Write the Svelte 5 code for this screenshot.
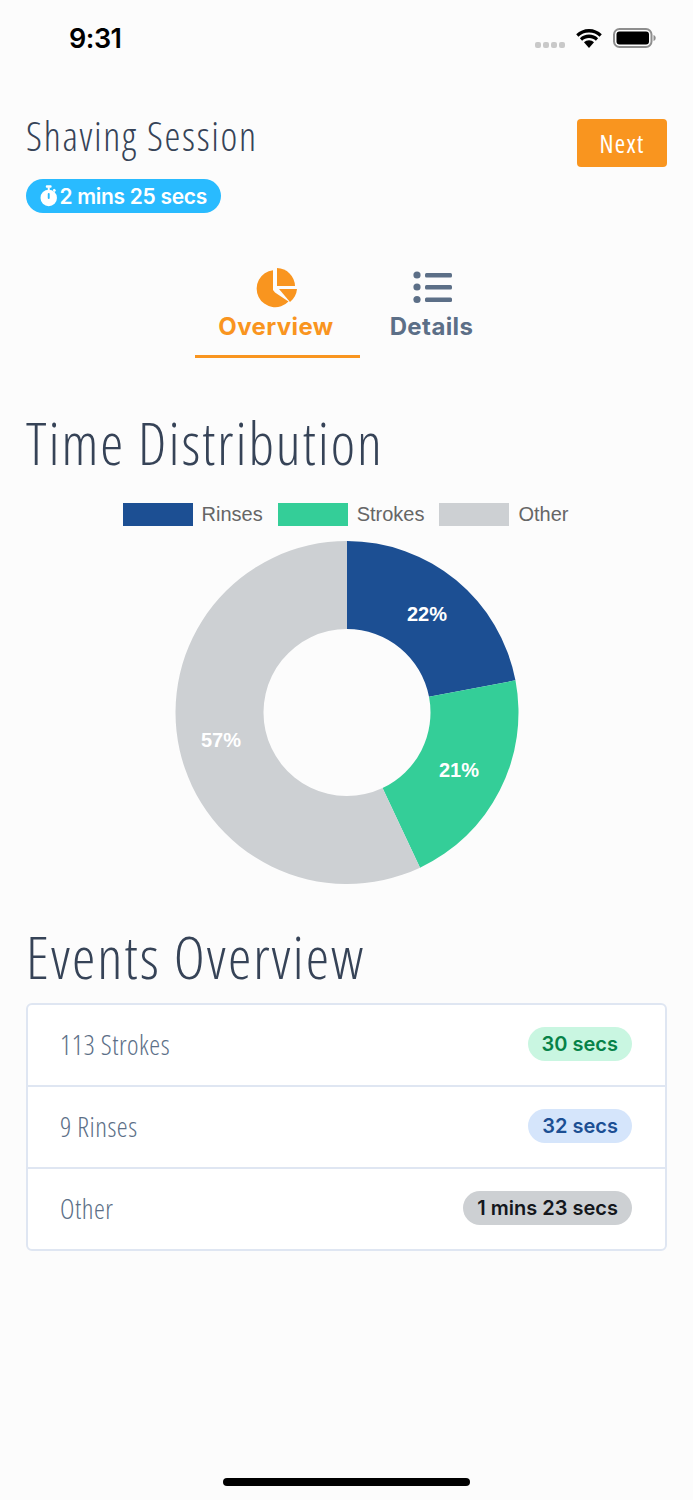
<script>
  const legend = [
    { label: 'Rinses', color: '#1c4f93' },
    { label: 'Strokes', color: '#34ce98' },
    { label: 'Other', color: '#cdd0d3' }
  ];

  const cx = 172;
  const cy = 171.5;
  const outer = 171.5;
  const inner = 83.5;

  const slices = [
    { share: 0.22, color: '#1c4f93', text: '22%', x: 252, y: 75 },
    { share: 0.21, color: '#34ce98', text: '21%', x: 284, y: 231 },
    { share: 0.57, color: '#cdd0d3', text: '57%', x: 46, y: 201 }
  ];

  function point(r, turn) {
    const a = turn * Math.PI * 2;
    return `${(cx + r * Math.sin(a)).toFixed(2)} ${(cy - r * Math.cos(a)).toFixed(2)}`;
  }

  function arc(start, share) {
    const end = start + share;
    const large = share > 0.5 ? 1 : 0;
    return `M${point(outer, start)} A${outer} ${outer} 0 ${large} 1 ${point(outer, end)} L${point(inner, end)} A${inner} ${inner} 0 ${large} 0 ${point(inner, start)} Z`;
  }

  let from = 0;
  const paths = slices.map((s) => {
    const d = arc(from, s.share);
    from += s.share;
    return { ...s, d };
  });

  const events = [
    { label: '113 Strokes', time: '30 secs', kind: 'green' },
    { label: '9 Rinses', time: '32 secs', kind: 'blue' },
    { label: 'Other', time: '1 mins 23 secs', kind: 'grey' }
  ];
</script>

<div class="screen">
  <div class="status">
    <span class="clock">9:31</span>
    <div class="status-icons">
      <div class="signal"><i></i><i></i><i></i><i></i></div>
      <svg class="wifi" viewBox="0 0 26 19" width="26" height="19">
        <path d="M13 3.500c4.200 0 7.900 1.600 10.600 4.200l2.200-2.500C22.400 2 17.900 0 13 0S3.600 2 .2 5.200l2.200 2.500C5.100 5.100 8.800 3.500 13 3.500z" fill="#000"/>
        <path d="M13 9c2.700 0 5.100 1 6.900 2.700l2.200-2.500C19.700 7 16.500 5.600 13 5.600S6.300 7 3.900 9.200l2.200 2.500C7.900 10 10.300 9 13 9z" fill="#000"/>
        <path d="M13 11.200c-2 0-3.700.8-5 2L13 19l5-5.800c-1.300-1.200-3-2-5-2z" fill="#000"/>
      </svg>
      <svg class="battery" viewBox="0 0 43 20" width="43" height="20">
        <rect x="1" y="1" width="37.500" height="18" rx="5.500" fill="none" stroke="#8e8e8e" stroke-width="2"/>
        <rect x="3.500" y="3.500" width="32.500" height="13" rx="3" fill="#000"/>
        <path d="M40.500 7c1.300.4 2.200 1.500 2.200 3s-.9 2.600-2.200 3z" fill="#8e8e8e"/>
      </svg>
    </div>
  </div>

  <header class="head">
    <div>
      <h1>Shaving Session</h1>
      <span class="duration">
        <svg viewBox="0 0 18 22" width="18" height="22">
          <rect x="6" y="0" width="6" height="2.500" rx="1" fill="#fff"/>
          <rect x="8" y="2" width="2" height="3" fill="#fff"/>
          <rect x="13.500" y="4" width="3" height="2.500" rx="1" fill="#fff" transform="rotate(45 15 5)"/>
          <circle cx="9" cy="13" r="8.500" fill="#fff"/>
          <rect x="8" y="8" width="2" height="6" rx="1" fill="#29bbff"/>
        </svg>
        <span>2 mins 25 secs</span>
      </span>
    </div>
    <button class="next">Next</button>
  </header>

  <nav class="tabs">
    <div class="tab active">
      <svg viewBox="0 0 44 40" width="44" height="40">
        <path d="M19 2.300A18.500 18.500 0 1 0 34.500 33.500L21 24.500 19 22z" fill="#f9951f"/>
        <path d="M23 0A18.500 18.500 0 0 1 41 18H23z" fill="#f9951f"/>
        <path d="M25 21H43A19 19 0 0 1 36 34z" fill="#f9951f"/>
      </svg>
      <span>Overview</span>
    </div>
    <div class="tab">
      <svg viewBox="0 0 44 40" width="44" height="40">
        <circle cx="7" cy="7" r="3.600" fill="#5c6f87"/>
        <circle cx="7" cy="19" r="3.600" fill="#5c6f87"/>
        <circle cx="7" cy="31.500" r="3.600" fill="#5c6f87"/>
        <rect x="15" y="5" width="27" height="4.400" rx="1.500" fill="#5c6f87"/>
        <rect x="15" y="17" width="27" height="4.400" rx="1.500" fill="#5c6f87"/>
        <rect x="15" y="29.500" width="27" height="4.400" rx="1.500" fill="#5c6f87"/>
      </svg>
      <span>Details</span>
    </div>
  </nav>

  <h2 class="time-title">Time Distribution</h2>

  <div class="legend">
    {#each legend as item}
      <div class="legend-item">
        <span class="swatch" style="background:{item.color}"></span>
        <span>{item.label}</span>
      </div>
    {/each}
  </div>

  <div class="chart">
    <svg viewBox="0 0 344 344" width="344" height="344">
      {#each paths as p}
        <path d={p.d} fill={p.color} />
      {/each}
      {#each paths as p}
        <text x={p.x} y={p.y} fill="#fff" text-anchor="middle" class="pct">{p.text}</text>
      {/each}
    </svg>
  </div>

  <h2 class="events-title">Events Overview</h2>

  <ul class="events">
    {#each events as e}
      <li>
        <span class="event-label">{e.label}</span>
        <span class="badge {e.kind}">{e.time}</span>
      </li>
    {/each}
  </ul>

  <div class="home"></div>
</div>

<style>
  :global(body) {
    margin: 0;
    background: #fcfcfc;
  }
  .screen {
    position: relative;
    height: 1500px;
    overflow: hidden;
    background: #fcfcfc;
    box-sizing: border-box;
  }
  .status {
    display: flex;
    justify-content: space-between;
    align-items: center;
    height: 76px;
    padding: 0 37px 0 69px;
  }
  .clock {
    font-family: Inter, "Liberation Sans", sans-serif;
    font-weight: 600;
    font-size: 27px;
    letter-spacing: -0.5px;
    color: #000;
  }
  .status-icons {
    display: flex;
    align-items: center;
    gap: 11px;
  }
  .signal {
    display: flex;
    gap: 2px;
    margin-top: 14px;
  }
  .signal i {
    width: 6px;
    height: 6px;
    border-radius: 2px;
    background: #c9c9c9;
  }
  .head {
    display: flex;
    justify-content: space-between;
    align-items: flex-start;
    padding: 0 26px;
    margin-top: 33px;
  }
  h1 {
    margin: 0 0 16px;
    font-family: "Open Sans", sans-serif;
    font-stretch: 75%;
    font-weight: 300;
    font-size: 40px;
    letter-spacing: 1.7px;
    line-height: 54px;
    color: #364357;
  }
  .duration {
    display: inline-flex;
    align-items: center;
    gap: 2px;
    height: 34px;
    width: 195px;
    box-sizing: border-box;
    padding: 0 14px;
    border-radius: 17px;
    background: #29bbff;
    color: #fff;
    font-family: Inter, sans-serif;
    font-weight: 600;
    font-size: 21px;
    letter-spacing: -0.3px;
    white-space: nowrap;
  }
  .next {
    width: 90px;
    height: 48px;
    margin-top: 10px;
    border: 0;
    border-radius: 4px;
    background: #f9951f;
    color: #fff;
    font-family: "Open Sans", sans-serif;
    font-stretch: 75%;
    font-size: 25px;
    letter-spacing: 1.3px;
  }
  .tabs {
    display: flex;
    margin: 55px 0 0 195px;
  }
  .tab {
    display: flex;
    flex-direction: column;
    align-items: center;
    width: 143px;
    height: 90px;
    box-sizing: border-box;
    font-family: Inter, sans-serif;
    font-weight: 700;
    font-size: 24px;
    letter-spacing: 0.4px;
    color: #5c6f87;
  }
  .tab span {
    line-height: 34px;
    margin-top: 2px;
  }
  .tab.active {
    width: 165px;
    padding-right: 3px;
    border-bottom: 3px solid #f9951f;
    color: #f9951f;
  }
  .time-title,
  .events-title {
    margin: 0;
    padding: 0 26px;
    font-family: "Open Sans", sans-serif;
    font-stretch: 75%;
    font-weight: 300;
    color: #364357;
  }
  .time-title {
    margin-top: 49px;
    font-size: 58px;
    letter-spacing: 2px;
    line-height: 72px;
  }
  .legend {
    display: flex;
    justify-content: center;
    gap: 15px;
    margin-top: 23px;
    height: 24px;
    padding-right: 2px;
    font-family: "Liberation Sans", sans-serif;
    font-size: 20px;
    color: #666;
  }
  .legend-item {
    display: flex;
    align-items: center;
    gap: 9px;
  }
  .swatch {
    width: 70px;
    height: 23px;
  }
  .chart {
    display: flex;
    justify-content: center;
    margin-top: 15px;
  }
  .chart svg {
    display: block;
  }
  .pct {
    font-family: "Liberation Sans", sans-serif;
    font-weight: 700;
    font-size: 20px;
    dominant-baseline: middle;
  }
  .events-title {
    margin-top: 35px;
    font-size: 59px;
    letter-spacing: 2px;
    line-height: 72px;
  }
  .events {
    list-style: none;
    margin: 11px 26px 0;
    padding: 0;
    background: #fff;
    border: 2px solid #dfe6f2;
    border-radius: 6px;
  }
  .events li {
    display: flex;
    justify-content: space-between;
    align-items: center;
    height: 80px;
    padding: 0 33px 0 32px;
  }
  .events li + li {
    border-top: 2px solid #dfe6f2;
  }
  .event-label {
    margin-top: -2px;
    font-family: "Open Sans", sans-serif;
    font-stretch: 75%;
    font-weight: 300;
    font-size: 27.500px;
    letter-spacing: 0.5px;
    color: #5c6f87;
  }
  .badge {
    display: inline-flex;
    align-items: center;
    height: 34px;
    padding: 0 14px;
    margin-top: -2px;
    border-radius: 17px;
    font-family: Inter, sans-serif;
    font-weight: 600;
    font-size: 20px;
  }
  .green { background: #c9f6e1; color: #068248; }
  .blue { background: #d5e5fb; color: #1c4f93; }
  .grey { background: #cdd0d3; color: #14171c; }
  .home {
    position: absolute;
    left: 223px;
    bottom: 14px;
    width: 247px;
    height: 8px;
    border-radius: 4px;
    background: #000;
  }
</style>
